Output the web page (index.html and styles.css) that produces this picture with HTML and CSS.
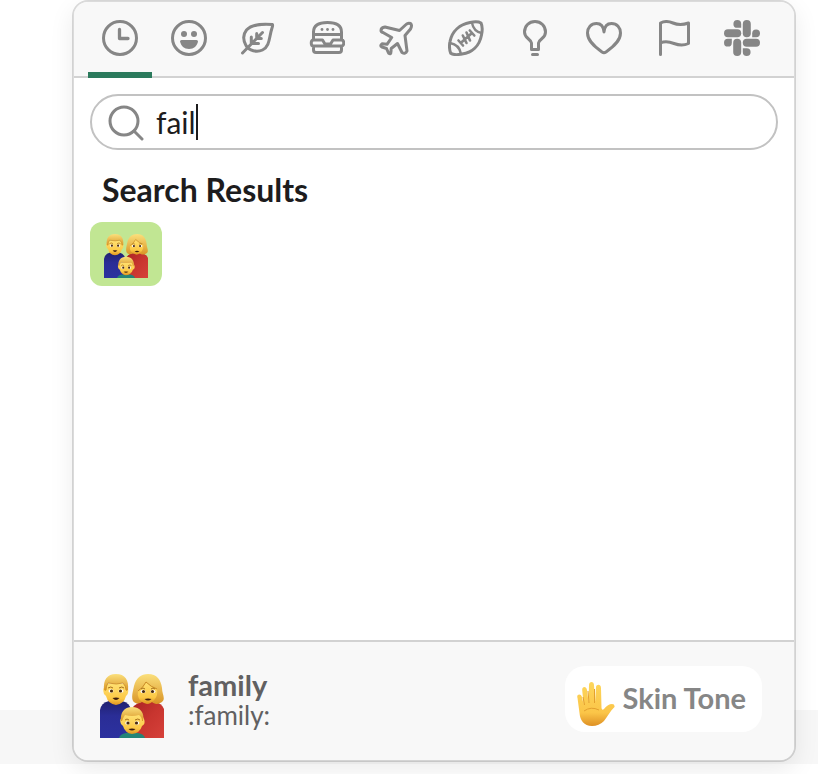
FILE: index.html
```html
<!DOCTYPE html>
<html lang="en">
<head>
<meta charset="utf-8">
<meta name="viewport" content="width=device-width, initial-scale=1">
<title>Emoji picker</title>
<link rel="stylesheet" href="styles.css">
</head>
<body>
<svg class="defs" width="0" height="0" aria-hidden="true">
  <defs>
    <linearGradient id="skin" x1="0" y1="0" x2="0" y2="1"><stop offset="0" stop-color="#ffe071"/><stop offset=".7" stop-color="#fcc845"/><stop offset="1" stop-color="#dd9420"/></linearGradient>
    <linearGradient id="hair" x1="0" y1="0" x2="0" y2="1"><stop offset="0" stop-color="#fbe07c"/><stop offset="1" stop-color="#d99425"/></linearGradient>
    <linearGradient id="navy" x1="0" y1="0" x2="0" y2="1"><stop offset="0" stop-color="#20216f"/><stop offset=".4" stop-color="#2a2d96"/><stop offset="1" stop-color="#2c319f"/></linearGradient>
    <linearGradient id="red" x1="0" y1="0" x2="1" y2="1"><stop offset="0" stop-color="#a92323"/><stop offset=".5" stop-color="#c8352f"/><stop offset="1" stop-color="#d6413a"/></linearGradient>
    <linearGradient id="palm" x1="0" y1="0" x2="0" y2="1"><stop offset="0" stop-color="#fdd65c"/><stop offset=".7" stop-color="#fbc548"/><stop offset="1" stop-color="#de9024"/></linearGradient>
    <symbol id="family" viewBox="0 0 64 64">
      <path fill="url(#navy)" d="M0 64V36Q1 29 9 27H22Q30 29 31 36V64Z"/>
      <path fill="url(#red)" d="M31 64V38Q33 30 41 28H54Q62 29 64 35V64Z"/>
      <path fill="url(#hair)" d="M33 27C31 23 33 17 34 12C36 4 41 0 48 0C57 0 61 6 62 14C62 20 66 25 62 28C58 31 54 30 52 28H42C39 30 35 30 33 27Z"/>
      <path fill="url(#skin)" d="M38 17Q43 14 46 8Q51 13 57 15Q58 21 55 25Q51 30 47 30Q42 29 39 25Q37 21 38 17Z"/>
      <path fill="none" stroke="#c98a25" d="M38 17Q43 14 46 8Q51 13 57 15"/>
      <path fill="url(#skin)" d="M5 13Q2 14 4 20L6 22Q8 30 16 31Q24 30 26 22Q29 20 28 14L26 10H6Z"/>
      <path fill="url(#hair)" d="M4 16C3 6 7 0 16 0C25 0 29 6 28 16L26 17Q26 12 23 9Q17 11 8 9Q6 12 6 17Z"/>
      <path fill="none" stroke="#c98a25" stroke-width=".8" d="M6 16Q6 12 8 9Q17 11 23 9Q26 12 26 16"/>
      <path fill="#248477" d="M19 64Q20 60 26 59H38Q44 60 45 64Z"/>
      <path fill="url(#skin)" d="M22 44Q19 45 21 50L23 52Q25 59 32 60Q40 59 42 52Q46 50 44 45L42 41H23Z"/>
      <path fill="url(#hair)" d="M21 47C20 39 24 33 32 33C40 33 45 39 43 47L42 47Q42 43 39 41Q32 43 25 41Q23 44 22 47Z"/>
      <g fill="#fff"><ellipse cx="11" cy="17" rx="2.500" ry="1.700"/><ellipse cx="21" cy="17" rx="2.500" ry="1.700"/><ellipse cx="43" cy="17.500" rx="2.500" ry="1.700"/><ellipse cx="53" cy="17.500" rx="2.500" ry="1.700"/><ellipse cx="27.500" cy="49" rx="2.300" ry="1.700"/><ellipse cx="37" cy="49" rx="2.300" ry="1.700"/></g>
      <g fill="#4a2a10"><circle cx="11.500" cy="17" r="1.600"/><circle cx="20.500" cy="17" r="1.600"/><circle cx="43.500" cy="17.500" r="1.600"/><circle cx="52.500" cy="17.500" r="1.600"/><circle cx="28" cy="49" r="1.600"/><circle cx="36.500" cy="49" r="1.600"/></g>
      <g fill="#3d1d0e"><path d="M12.500 24Q16 23 19.500 24Q16 28 12.500 24"/><path d="M44.500 25Q48 24 51.500 25Q48 28 44.500 25"/><path d="M28.500 55Q32 54 35.500 55Q32 58 28.500 55"/></g>
      <g fill="none" stroke="#a66f1c"><path d="M8 14Q11 12 13 14M19 14Q22 12 24 14M41 15Q43 13 45 15M51 15Q53 13 55 15M25 46Q27 44 29 46M35 46Q38 44 40 46"/></g>
    </symbol>
  </defs>
</svg>

<div class="page-band"></div>

<main class="picker">
  <nav class="tabs" aria-label="Emoji categories">
    <button class="tab tab-active" type="button" aria-label="Frequently used"><svg class="icon" viewBox="0 0 36 36"><circle cx="18" cy="18" r="16.500"/><path d="M17.500 9.500V18.500H26" stroke-width="3.300"/></svg></button>
    <button class="tab" type="button" aria-label="Smileys and people"><svg class="icon" viewBox="0 0 36 36"><circle cx="18" cy="18" r="16.500"/><g class="solid"><circle cx="13" cy="14" r="3"/><circle cx="23" cy="14" r="3"/><path d="M10.500 20H25.500Q27 20 27 21.500C26 26 23 29 18 29S10 26 9 21.500Q9 20 10.500 20Z"/></g></svg></button>
    <button class="tab" type="button" aria-label="Nature"><svg class="icon" viewBox="0 0 36 36"><path d="M32.500 4.500C22 3.500 11 5 6.500 10C2.500 15 3.500 21 6 25.500C9 31 17 32.500 22.500 30C30 26.500 29 17 32 8Q33 5 32.500 4.500Z"/><path d="M2.500 33L22.500 12.500M16.700 13.500V18.500H21.300M11.300 17V23.500H18.500"/></svg></button>
    <button class="tab" type="button" aria-label="Food and drink"><svg class="icon" viewBox="0 0 36 36"><path d="M4.500 19V12C4.500 5.500 10 2.500 18.500 2.500S32.500 5.500 32.500 12V19M4.500 14.500H32.500M4.500 20H13.500L16 24H21.500L24 20H32.500C35.500 20 35.500 26 32.500 26H4.500C1.500 26 1.500 20 4.500 20ZM4.500 26V30Q4.500 32.500 7 32.500H30Q32.500 32.500 32.500 30V26"/><g class="solid"><circle cx="13" cy="9.500" r="1.400"/><circle cx="18.500" cy="9.500" r="1.400"/><circle cx="24" cy="9.500" r="1.400"/></g></svg></button>
    <button class="tab" type="button" aria-label="Travel and places"><svg class="icon" viewBox="0 0 36 36"><path d="M28 4.500L21.500 10.500L7 7Q3 7.500 3 10.500Q3 12 5 12.500L13.700 17.500L9 24.300L4 23.800Q1.500 26 4 27L8.500 28.500L10.500 33Q13 35 13 31.500L13.200 28.500L19.500 23.500L24 32.500Q27.500 34.500 29 31L27 15.500L32.500 9Q34.500 5 32.500 3.500Q30 2.500 28 4.500Z"/></svg></button>
    <button class="tab" type="button" aria-label="Activity"><svg class="icon" viewBox="0 0 36 36"><path d="M22 2.500C27 1.500 31 1.800 33 3C34.400 6 34.600 10 33.500 15C31.500 26 24 32.500 14 34C9 35 5 34.800 2.700 33.300C1.500 30 1 26 2 21.500C4 11 12 4.500 22 2.500Z"/><path d="M24 3C25 8 28 12 33.500 13M2 23C8 24 12 28 13 34" stroke-width="2.400"/><path d="M12.700 23L24 13M10.500 20.500L15 25.500M21.800 10.500L26.300 15.500M14.800 15.500L18.500 23M18.500 12.500L22 20.500" stroke-width="2.600"/></svg></button>
    <button class="tab" type="button" aria-label="Objects"><svg class="icon" viewBox="0 0 36 36"><path d="M14.500 29.500V23Q14 21 11 18.500C8.500 16.500 7.500 14.500 7.500 12C7.500 6 12 1.500 18 1.500S28.500 6 28.500 12C28.500 14.500 27.500 16.500 25 18.500Q22 21 21.500 23V29.500ZM15.500 34.500H20.500"/></svg></button>
    <button class="tab" type="button" aria-label="Symbols"><svg class="icon" viewBox="0 0 36 36"><path d="M18 12C17.500 6 14.500 3.500 10.500 3.500C5 3.500 1.500 7.500 1.500 13C1.500 21 9 27 16 32Q18 33.300 20 32C27 27 34.500 21 34.500 13C34.500 7.500 31 3.500 25.500 3.500C21.500 3.500 18.500 6 18 12Z"/></svg></button>
    <button class="tab" type="button" aria-label="Flags"><svg class="icon" viewBox="0 0 36 36"><path d="M5.500 34.500V3Q11 0 18 3T33.500 3V23.500Q27 26.500 19 23.500T5.500 23"/></svg></button>
    <button class="tab" type="button" aria-label="Custom"><svg class="icon" viewBox="0 0 36 36"><g class="solid"><g id="arm"><rect x="18.800" width="8" height="17.200" rx="4"/><path d="M17.200 7.800H13.300A3.900 3.900 0 1 1 17.200 3.900Z"/></g><use href="#arm" transform="rotate(90 18 18)"/><use href="#arm" transform="rotate(180 18 18)"/><use href="#arm" transform="rotate(270 18 18)"/></g></svg></button>
  </nav>

  <section class="results">
    <label class="search">
      <svg class="search-icon" viewBox="0 0 38 38" aria-hidden="true"><circle cx="18" cy="18" r="14"/><path d="M28 28L36 36"/></svg>
      <input class="search-input" type="text" value="fail" aria-label="Search emoji">
      <span class="caret"></span>
    </label>
    <h1 class="heading">Search Results</h1>
    <button class="result" type="button" aria-label="family"><svg class="result-emoji"><use href="#family"/></svg></button>
  </section>

  <footer class="preview">
    <svg class="preview-emoji" aria-hidden="true"><use href="#family"/></svg>
    <div class="preview-text">
      <strong class="preview-name">family</strong>
      <span class="preview-code">:family:</span>
    </div>
    <button class="skin-tone" type="button">
      <svg class="hand" viewBox="0 0 38 44" aria-hidden="true">
        <path fill="url(#palm)" d="M.5 16C-1 12 4 11 5 15L6.500 22L5.200 8C5 4 9.500 4 10 8L11.500 20L12 3C12 -1 17 -1 17 3L18 20L19 5C19.500 2 24 2 24 6L24.500 26Q25 29 27 27Q31 22 35 22Q38 22 37.500 25C33 29 31 34 27 39Q22 44 15 44C7 44 3 38 2.500 31Z"/>
        <path fill="none" stroke="#e3a02f" d="M6 15L7.500 23M11 9L12 21M17.500 7V21M7 29Q14 24 22 28"/>
      </svg>
      <span>Skin Tone</span>
    </button>
  </footer>
</main>
</body>
</html>
```
FILE: styles.css
```css
* {
  box-sizing: border-box;
}

body {
  margin: 0;
  min-height: 100vh;
  display: grid;
  background: #fff;
  color: #1d1c1d;
  font-family: Lato, "Liberation Sans", sans-serif;
}

button {
  border: 0;
  padding: 0;
  background: none;
  font: inherit;
  cursor: pointer;
}

.defs {
  position: absolute;
}

.page-band,
.picker {
  grid-area: 1 / 1;
}

.page-band {
  align-self: end;
  height: 54px;
  margin-bottom: 10px;
  background: #f7f7f7;
}

.picker {
  display: flex;
  flex-direction: column;
  margin: 0 22px 12px 72px;
  border: 2px solid rgba(0, 0, 0, 0.14);
  border-radius: 16px;
  background: #fff;
  background-clip: padding-box;
  box-shadow: 0 8px 24px rgba(0, 0, 0, 0.08);
}

.tabs {
  display: flex;
  justify-content: space-between;
  padding: 0 20px 0 14px;
  border-bottom: 2px solid #d2d2d2;
  border-radius: 14px 14px 0 0;
  background: #f8f8f8;
}

.tab {
  display: grid;
  place-items: center;
  width: 64px;
  height: 76px;
  margin-bottom: -2px;
  padding-top: 2px;
  border-bottom: 6px solid transparent;
}

.tab-active {
  border-color: #2b7a5c;
}

.icon {
  width: 36px;
  height: 36px;
  fill: none;
  stroke: #868686;
  stroke-width: 3;
  stroke-linecap: round;
  stroke-linejoin: round;
}

.solid {
  fill: #868686;
  stroke: none;
}

.results {
  flex: 1;
  padding: 16px;
}

.search {
  display: flex;
  align-items: center;
  height: 56px;
  padding: 0 14px;
  border: 2px solid #c2c2c2;
  border-radius: 28px;
}

.search-icon {
  width: 38px;
  height: 38px;
  margin-right: 12px;
  fill: none;
  stroke: #868686;
  stroke-width: 3;
  stroke-linecap: round;
}

.search-input {
  field-sizing: content;
  padding: 0;
  border: 0;
  outline: 0;
  background: none;
  color: inherit;
  font: 30px/36px Lato, "Liberation Sans", sans-serif;
  caret-color: transparent;
}

.caret {
  width: 2px;
  height: 36px;
  background: #1d1c1d;
}

.heading {
  margin: 20px 12px 12px;
  font-size: 32px;
  line-height: 40px;
  font-weight: 700;
}

.result {
  display: grid;
  place-items: center;
  width: 72px;
  height: 64px;
  padding-top: 4px;
  border-radius: 12px;
  background: #c1e693;
}

.result-emoji {
  width: 44px;
  height: 44px;
}

.preview {
  display: flex;
  align-items: center;
  height: 120px;
  padding: 0 32px 4px 26px;
  border-top: 2px solid #d2d2d2;
  border-radius: 0 0 14px 14px;
  background: #f8f8f8;
  color: #616061;
}

.preview-emoji {
  width: 64px;
  height: 64px;
  margin: 14px 24px 0 0;
}

.preview-text {
  display: flex;
  flex: 1;
  flex-direction: column;
}

.preview-name {
  font-size: 29px;
  line-height: 32px;
}

.preview-code {
  font-size: 26px;
  line-height: 28px;
}

.skin-tone {
  display: flex;
  align-items: center;
  gap: 8px;
  height: 66px;
  padding: 0 16px 4px 12px;
  border-radius: 20px;
  background: #fff;
  color: #868686;
  font-size: 29px;
  font-weight: 700;
}

.hand {
  width: 38px;
  height: 44px;
  margin-top: 14px;
}
```
